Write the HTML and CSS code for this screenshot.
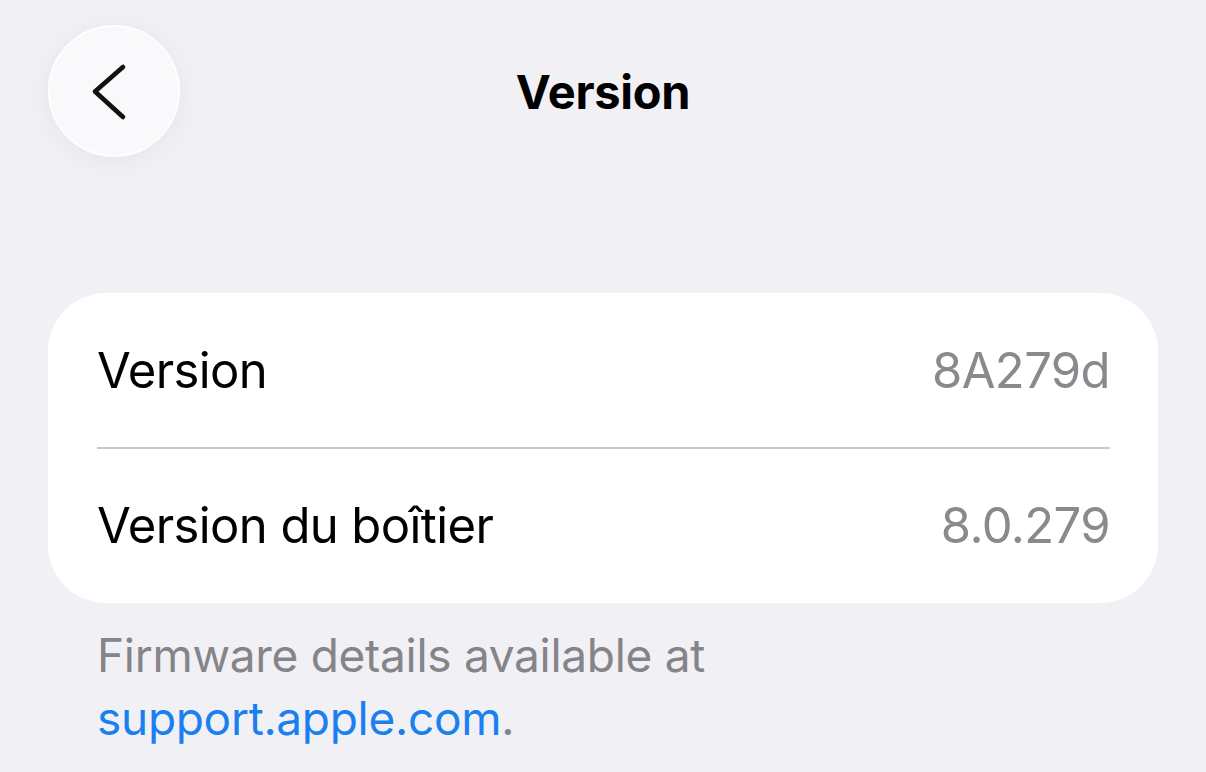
FILE: index.html
```html
<!DOCTYPE html>
<html lang="fr">
<head>
<meta charset="utf-8">
<title>Version</title>
<link rel="stylesheet" href="styles.css">
</head>
<body>
<div class="screen">
  <header class="nav">
    <div class="nav-left">
      <button class="back" aria-label="Retour">
        <svg width="132" height="132" viewBox="0 0 132 132">
          <path d="M75 42 L47 66.5 L75 92" fill="none" stroke="#111" stroke-width="4.6" stroke-linecap="round" stroke-linejoin="round"/>
        </svg>
      </button>
    </div>
    <h1 class="title">Version</h1>
    <div class="nav-right"></div>
  </header>

  <section class="card">
    <div class="row">
      <span class="label">Version</span>
      <span class="value">8A279d</span>
    </div>
    <div class="sep"></div>
    <div class="row">
      <span class="label">Version du boîtier</span>
      <span class="value">8.0.279</span>
    </div>
  </section>

  <p class="footer">Firmware details available at <a class="link" href="#">support.apple.com</a>.</p>
</div>
</body>
</html>
```

FILE: styles.css
```css
* { box-sizing: border-box; }
html, body {
  margin: 0;
  padding: 0;
  background: #f1f0f5;
}
body {
  font-family: Inter, "Noto Sans", "Liberation Sans", sans-serif;
  color: #000;
  width: 1206px;
  height: 772px;
  overflow: hidden;
}
.screen {
  display: flex;
  flex-direction: column;
}
.nav {
  display: grid;
  grid-template-columns: 1fr auto 1fr;
  align-items: center;
  padding-top: 25px;
  height: 157px;
}
.nav-left {
  padding-left: 48px;
  display: flex;
}
.back {
  width: 132px;
  height: 132px;
  border-radius: 50%;
  border: 2px solid #fefefe;
  background: #f9f9fb;
  padding: 0;
  margin: 0;
  display: flex;
  align-items: center;
  justify-content: center;
  box-shadow: 0 4px 30px rgba(0, 0, 0, 0.05);
}
.back svg { display: block; margin: -2px; }
.title {
  margin: 0;
  font-size: 47px;
  font-weight: 700;
  letter-spacing: -0.3px;
}
.card {
  margin: 136px 48px 0;
  background: #fff;
  border-radius: 58px;
  padding: 0 48px 0 49px;
  display: flex;
  flex-direction: column;
}
.row {
  height: 154px;
  display: flex;
  align-items: center;
  justify-content: space-between;
  font-size: 49px;
  letter-spacing: -0.6px;
}
.value { color: #8a8a8e; }
.sep {
  height: 1.5px;
  background: #c8c8cc;
}
.footer {
  margin: 21px 0 0 97px;
  font-size: 46px;
  line-height: 63px;
  color: #858589;
  letter-spacing: -0.3px;
  max-width: 660px;
}
.link {
  color: #1a80f0;
  text-decoration: none;
}
```
